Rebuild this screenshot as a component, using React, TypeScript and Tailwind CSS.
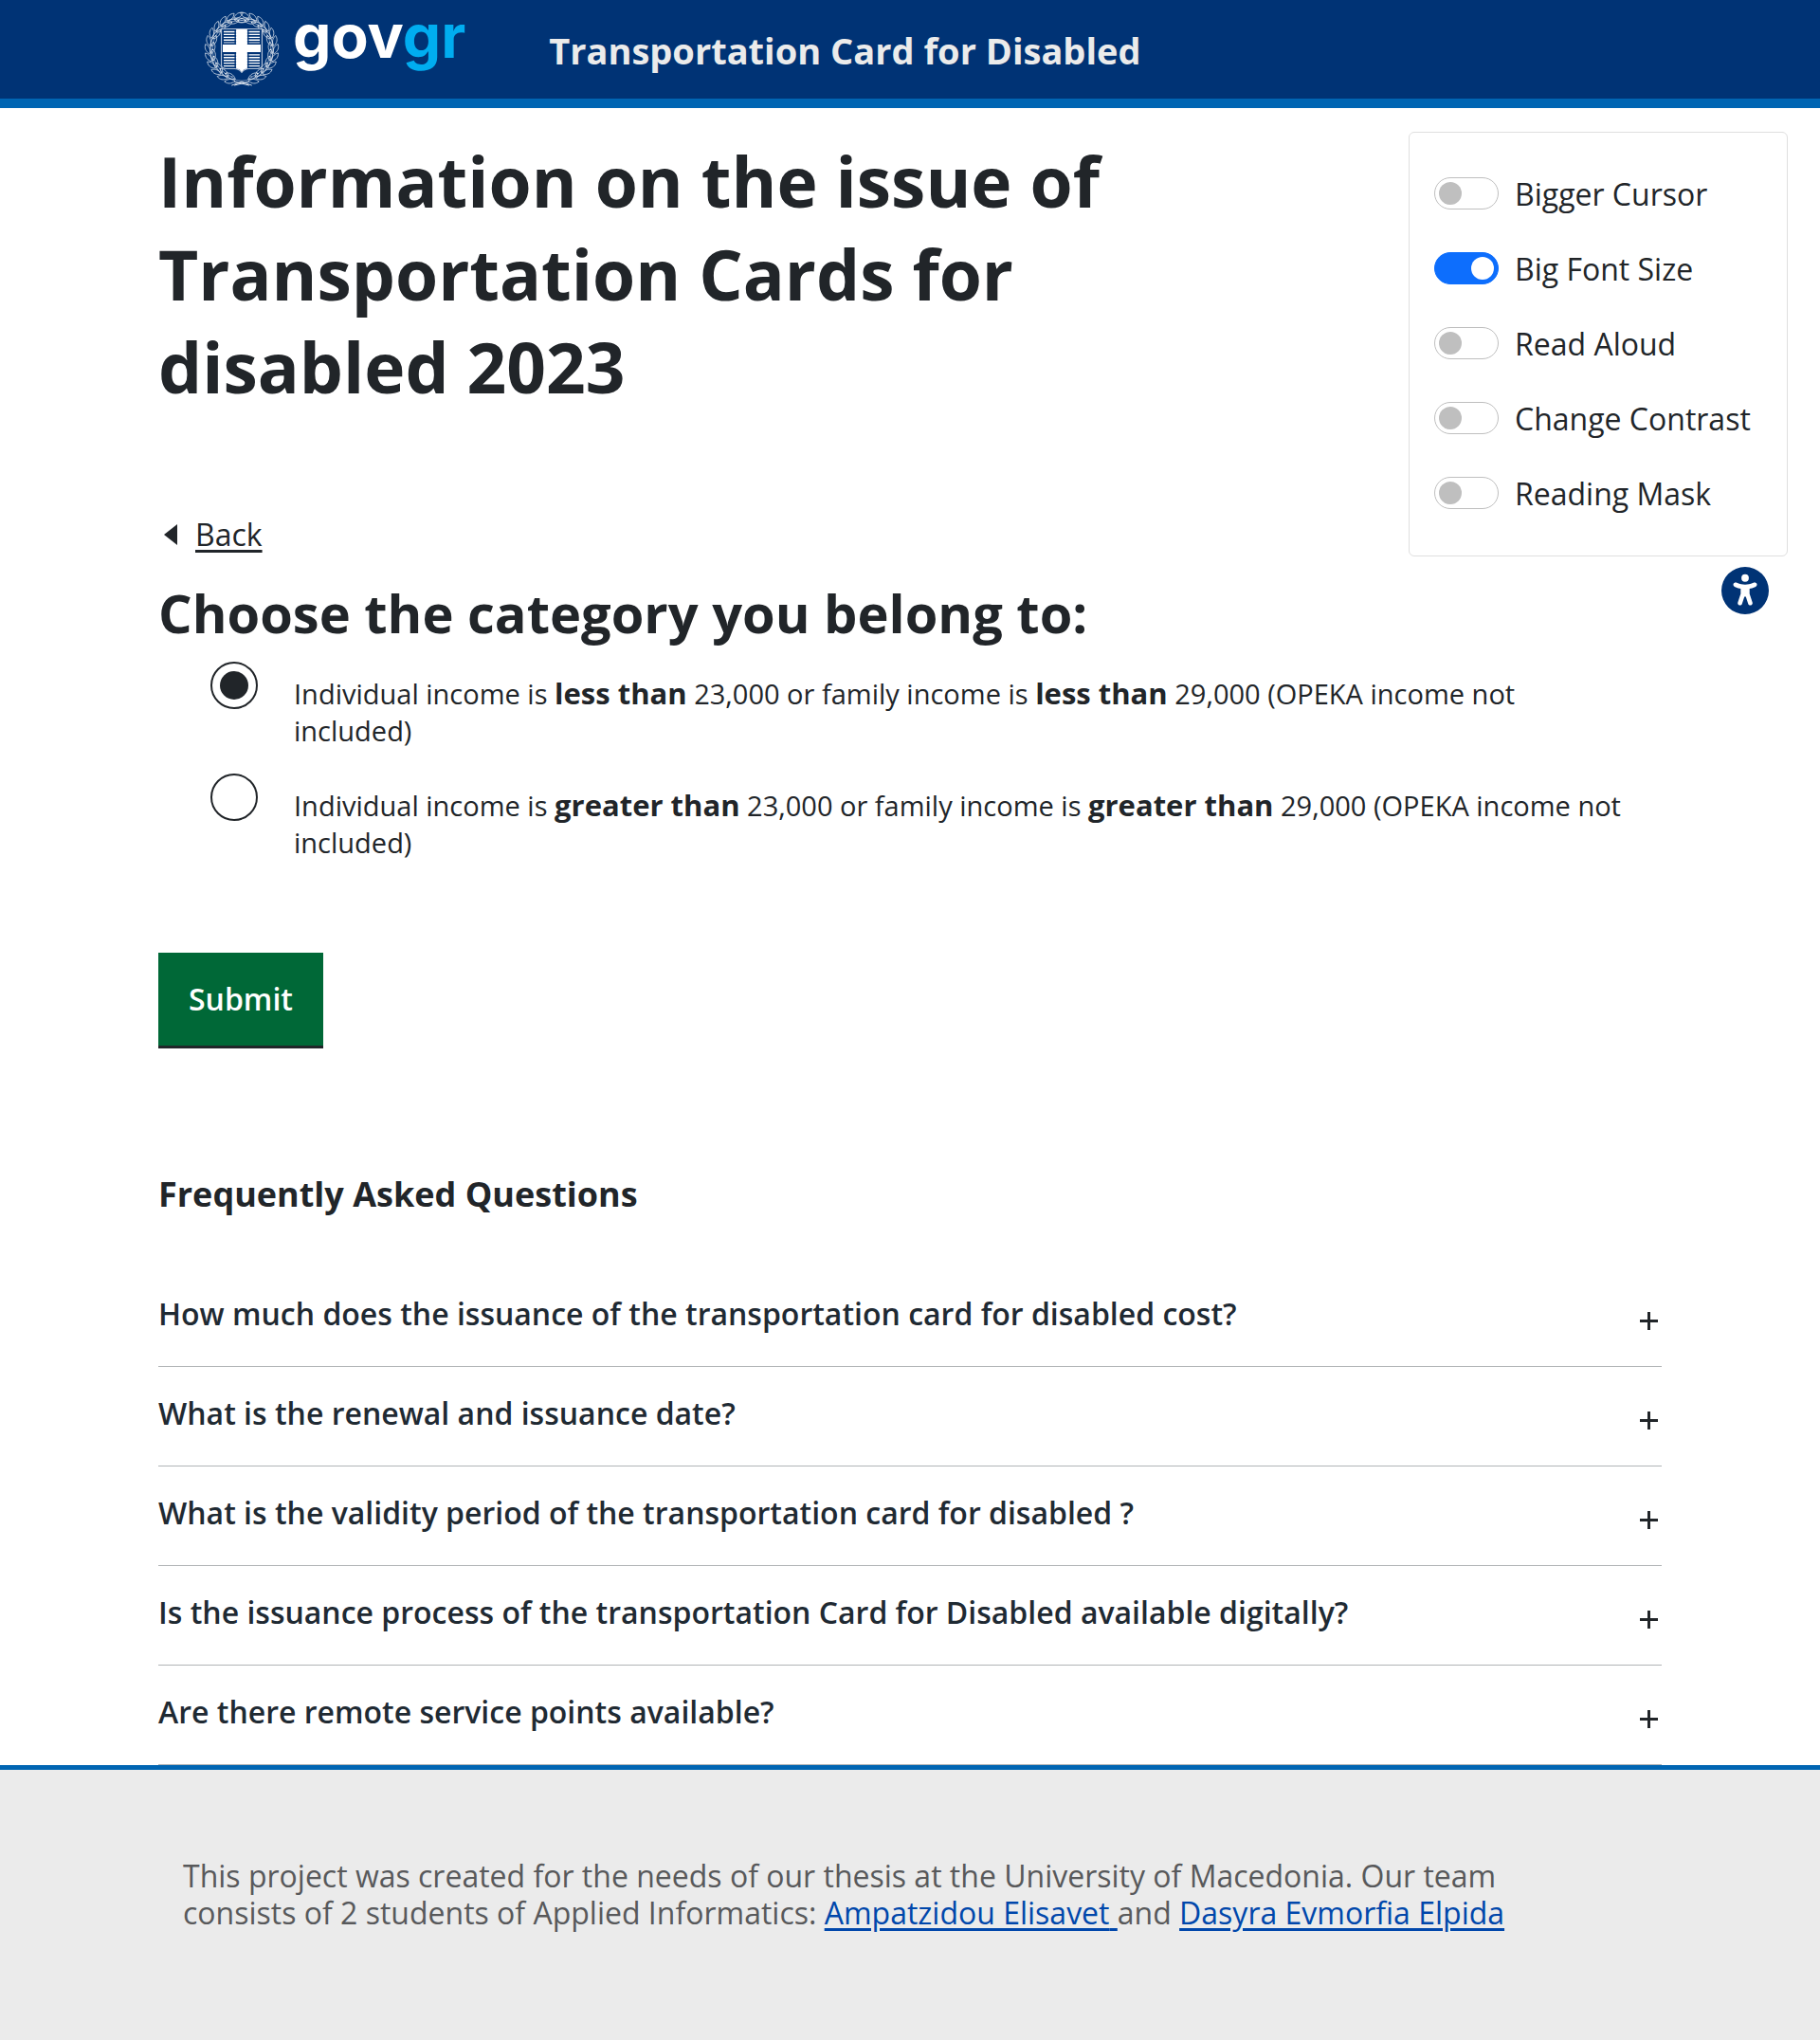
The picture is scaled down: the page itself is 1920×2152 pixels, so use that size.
import { useState } from "react";
import { FaUniversalAccess } from "react-icons/fa6";

const LEAF_ANGLES = [12, 26, 40, 54, 68, 82, 96, 110, 124, 138, 152, 166];

function Branch() {
  return (
    <g fill="none" stroke="#e3e9f1" strokeWidth="0.7">
      <path d="M40 74 C18 73 6 58 6 40 C6 22 18 9 34 6" strokeWidth="0.5" />
      {LEAF_ANGLES.map((angle) => (
        <g key={angle} transform={`rotate(${angle} 40 40)`}>
          <path d="M40 73 C37 68 32 67 28 69 C31 73 36 75 40 73 Z" />
          <path d="M40 73 L31 70" strokeWidth="0.5" />
          <path d="M40 75 C37 79 33 80 29 78 C32 74 36 73 40 75 Z" />
          <circle cx="36" cy="71" r="0.6" fill="#ffffff" stroke="none" />
        </g>
      ))}
    </g>
  );
}

function Emblem() {
  const stripes = [21, 24, 27, 30, 33, 46, 49, 52, 55, 58];
  return (
    <svg viewBox="-1 -1 82 82" className="size-20" role="img" aria-label="Hellenic Republic">
      <Branch />
      <g transform="matrix(-1 0 0 1 80 0)">
        <Branch />
      </g>
      <path d="M29 79 L40 75 L51 79 M32 75 L48 79 M48 75 L32 79" stroke="#ffffff" strokeWidth="0.9" fill="none" />
      <path
        d="M18 18 H62 V57 Q62 61 57 61 H48 Q43 61 40 65 Q37 61 32 61 H23 Q18 61 18 57 Z"
        fill="#003375"
        stroke="#b4c3d8"
        strokeWidth="1.2"
      />
      {stripes.map((y) => (
        <path key={y} d={`M20.500 ${y} H59.500`} stroke="#ffffff" strokeWidth="1.4" />
      ))}
      <path
        d="M33 18.500 V34 H20 V44 H33 M47 18.500 V34 H60 V44 H47 M33 44 V60 M47 44 V60"
        stroke="#003375"
        strokeWidth="1.4"
        fill="none"
      />
      <path d="M34 18.500 H46 V35 H60.500 V43 H46 V61 Q42 61 40 64.500 Q38 61 34 61 V43 H19.500 V35 H34 Z" fill="#ffffff" />
    </svg>
  );
}

const SETTINGS = [
  { label: "Bigger Cursor", on: false },
  { label: "Big Font Size", on: true },
  { label: "Read Aloud", on: false },
  { label: "Change Contrast", on: false },
  { label: "Reading Mask", on: false },
];

function AccessibilityPanel() {
  return (
    <aside className="absolute right-[34px] top-[139px] flex w-[400px] flex-col items-end">
      <div className="w-full rounded-md border border-[#dfdfdf] bg-white pb-[27px] pl-[26px] pt-6">
        {SETTINGS.map(({ label, on }) => (
          <label key={label} className="flex h-[79px] items-center gap-[17px] text-[32px] leading-10">
            <input
              type="checkbox"
              role="switch"
              defaultChecked={on}
              className="flex h-[34px] w-[68px] shrink-0 appearance-none items-center rounded-full border border-[#bfbfbf] bg-white px-1 before:size-6 before:rounded-full before:bg-[#bfbfbf] checked:justify-end checked:border-[#0d6efd] checked:bg-[#0d6efd] checked:before:bg-white"
            />
            <span className="pt-0.5">{label}</span>
          </label>
        ))}
      </div>
      <button type="button" aria-label="Accessibility options" className="mr-5 mt-[11px] text-[#003375]">
        <FaUniversalAccess size={50} />
      </button>
    </aside>
  );
}

const OPTIONS = ["less than", "greater than"];

const QUESTIONS = [
  "How much does the issuance of the transportation card for disabled cost?",
  "What is the renewal and issuance date?",
  "What is the validity period of the transportation card for disabled ?",
  "Is the issuance process of the transportation Card for Disabled available digitally?",
  "Are there remote service points available?",
];

export default function App() {
  const [choice, setChoice] = useState(0);

  return (
    <div className="relative min-h-screen bg-white font-['Open_Sans','Noto_Sans',sans-serif] text-[#212529]">
      <header className="flex h-[114px] items-center border-b-10 border-[#0065b3] bg-[#003375] pl-[215px]">
        <a href="#" className="flex items-center gap-3.5">
          <Emblem />
          <span className="pb-7 font-[Inter,sans-serif] text-[64px] font-bold leading-none text-white">
            gov<span className="text-[#00adf0]">gr</span>
          </span>
        </a>
        <span className="ml-[88px] pt-0.5 text-[38px] font-bold leading-none text-[#ebebeb]">
          Transportation Card for Disabled
        </span>
      </header>

      <AccessibilityPanel />

      <main className="px-[167px] pt-7">
        <h1 className="w-2/3 text-[73px] font-bold leading-[98px]">
          Information on the issue of Transportation Cards for disabled 2023
        </h1>

        <a href="#" className="mt-[108px] flex w-fit items-center gap-[19px] pl-1.5 text-[32px] leading-10">
          <svg viewBox="0 0 14 22" className="h-[22px] w-3.5" aria-hidden="true">
            <path d="M14 0 V22 L0 11 Z" fill="#212529" />
          </svg>
          <span className="underline decoration-3 underline-offset-4">Back</span>
        </a>

        <form className="pt-[26px]" onSubmit={(event) => event.preventDefault()}>
          <fieldset>
            <legend className="text-[56px] font-bold leading-[72px]">Choose the category you belong to:</legend>
            <div className="mt-4 flex flex-col gap-[26px] pl-[55px] pr-9">
              {OPTIONS.map((option, index) => (
                <label key={option} className="flex items-start gap-[38px]">
                  <input
                    type="radio"
                    name="category"
                    checked={choice === index}
                    onChange={() => setChoice(index)}
                    className="flex size-[50px] shrink-0 appearance-none items-center justify-center rounded-full border-2 border-[#212529] checked:before:size-[30px] checked:before:rounded-full checked:before:bg-[#212529]"
                  />
                  <span className="pt-3.5 text-[29px] leading-[39px]">
                    Individual income is <strong className="text-[31px] leading-[36px]">{option}</strong> 23,000 or
                    family income is <strong className="text-[31px] leading-[36px]">{option}</strong> 29,000 (OPEKA
                    income not included)
                  </span>
                </label>
              ))}
            </div>
          </fieldset>
          <button
            type="submit"
            className="mt-[97px] h-[101px] border-b-3 border-[#212529] bg-[#006837] px-8 text-[32px] font-semibold text-white"
          >
            Submit
          </button>
        </form>

        <section>
          <h2 className="mt-[130px] text-[36px] font-bold leading-[48px]">Frequently Asked Questions</h2>
          <div className="mt-[53px]">
            {QUESTIONS.map((question) => (
              <button
                key={question}
                type="button"
                className="flex h-[105px] w-full items-start justify-between border-b border-[#b1b4b6] pr-1 pt-[29px] text-left text-[32px] font-semibold leading-10 text-[#1f2a33]"
              >
                {question}
                <svg viewBox="0 0 19 19" className="mt-[18px] size-[19px] shrink-0" aria-hidden="true">
                  <path d="M0 9.500 H19 M9.500 0 V19" stroke="#212529" strokeWidth="3" />
                </svg>
              </button>
            ))}
          </div>
        </section>
      </main>

      <footer className="border-t-5 border-[#0065b3] bg-[#ebebeb] px-[193px] pb-[115px] pt-[92px]">
        <p className="max-w-[1420px] text-[32px] leading-[39px] text-[#58595b]">
          This project was created for the needs of our thesis at the University of Macedonia. Our team consists of 2
          students of Applied Informatics:{" "}
          <a href="#" className="text-[#0047ab] underline decoration-3 underline-offset-4">
            Ampatzidou Elisavet{" "}
          </a>
          and{" "}
          <a href="#" className="text-[#0047ab] underline decoration-3 underline-offset-4">
            Dasyra Evmorfia Elpida
          </a>
        </p>
      </footer>
    </div>
  );
}
